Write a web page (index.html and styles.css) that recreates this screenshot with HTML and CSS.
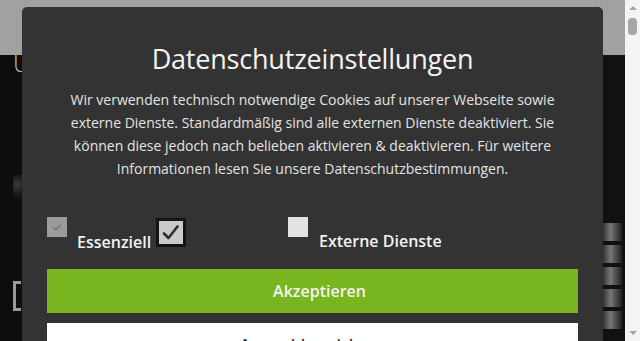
FILE: index.html
```html
<!DOCTYPE html>
<html lang="de">
<head>
<meta charset="utf-8">
<title>Datenschutzeinstellungen</title>
<link rel="stylesheet" href="styles.css">
</head>
<body>
<div class="window">
  <div class="page">
    <header class="topbar"></header>
    <section class="hero">
      <div class="hero-main">
        <span class="hero-title">U</span>
        <div class="hero-lights"></div>
        <span class="hero-bracket"></span>
      </div>
      <div class="hero-shelves">
        <span class="shelf"></span>
        <span class="shelf"></span>
        <span class="shelf"></span>
        <span class="shelf"></span>
        <span class="shelf"></span>
      </div>
    </section>
  </div>
  <div class="scrollbar">
    <span class="arrow arrow-up"></span>
    <span class="thumb"></span>
    <span class="track"></span>
    <span class="arrow arrow-down"></span>
  </div>

  <div class="modal" role="dialog" aria-labelledby="privacy-title">
    <h2 id="privacy-title" class="modal-title">Datenschutzeinstellungen</h2>
    <p class="modal-text">Wir verwenden technisch notwendige Cookies auf unserer Webseite sowie externe Dienste. Standardmäßig sind alle externen Dienste deaktiviert. Sie können diese jedoch nach belieben aktivieren &amp; deaktivieren. Für weitere Informationen lesen Sie unsere Datenschutzbestimmungen.</p>

    <div class="options">
      <label class="option option-essential">
        <span class="check check-disabled">
          <svg viewBox="0 0 20 20" width="20" height="20"><path d="M6.5 10.5 L9 12.8 L13.5 8" fill="none" stroke="#777" stroke-width="1.6" stroke-linecap="round" stroke-linejoin="round"/></svg>
        </span>
        <span class="option-label">Essenziell</span>
        <span class="check-big">
          <svg viewBox="0 0 24 23" width="24" height="23"><path d="M5 12.5 L9.5 17 L18.5 5.5" fill="none" stroke="#2e2e36" stroke-width="2.6" stroke-linecap="round" stroke-linejoin="round"/></svg>
        </span>
      </label>
      <label class="option option-external">
        <span class="check check-empty"></span>
        <span class="option-label">Externe Dienste</span>
      </label>
    </div>

    <button class="btn btn-accept" type="button">Akzeptieren</button>
    <button class="btn btn-save" type="button">Auswahl speichern</button>
  </div>
</div>
</body>
</html>
```

FILE: styles.css
```css
* {
  box-sizing: border-box;
}

html,
body {
  margin: 0;
  padding: 0;
  overflow: hidden;
}

body {
  font-family: "Open Sans", "Noto Sans", "DejaVu Sans", sans-serif;
  background: #0d0d0d;
}

.window {
  position: relative;
  display: flex;
  width: 640px;
  height: 341px;
  overflow: hidden;
}

.page {
  flex: 1;
  display: flex;
  flex-direction: column;
}

.topbar {
  height: 55px;
  background: #a1a1a1;
}

.hero {
  flex: 1;
  display: flex;
  background: #0d0d0d;
}

.hero-main {
  flex: 1;
  display: flex;
  flex-direction: column;
  padding-left: 13px;
}

.hero-title {
  font-family: "Open Sans", sans-serif;
  font-weight: 300;
  font-size: 24px;
  line-height: 20px;
  color: #b8b8b8;
  height: 20px;
  overflow: hidden;
  margin-top: -2px;
}

.hero-lights {
  width: 10px;
  height: 24px;
  margin-top: 102px;
  background: radial-gradient(circle at 40% 40%, #3a3a3a 0, #1a1a1a 60%, transparent 100%);
}

.hero-bracket {
  width: 8px;
  height: 30px;
  margin-top: 82px;
  border: 3px solid #9a9a9a;
  border-right: none;
}

.hero-shelves {
  width: 22px;
  display: flex;
  flex-direction: column;
  justify-content: flex-end;
  gap: 4px;
  padding-bottom: 12px;
  background: #111;
}

.shelf {
  height: 18px;
  margin-right: 3px;
  background: linear-gradient(90deg, #333 0, #777 40%, #4a4a4a 70%, #222 100%);
}

.scrollbar {
  width: 15px;
  display: flex;
  flex-direction: column;
  align-items: center;
  background: #f4f4f4;
}

.arrow {
  width: 0;
  height: 0;
  border-left: 4px solid transparent;
  border-right: 4px solid transparent;
}

.arrow-up {
  margin-top: 6px;
  border-bottom: 4px solid #a3a3a3;
}

.arrow-down {
  margin-bottom: 6px;
  border-top: 4px solid #a3a3a3;
}

.thumb {
  width: 9px;
  height: 17px;
  margin-top: 8px;
  border-radius: 4px;
  background: #a5a5a5;
}

.track {
  flex: 1;
}

.modal {
  position: absolute;
  left: 22px;
  top: 7px;
  width: 581px;
  height: 360px;
  padding: 33px 25px 0;
  background: #333333;
  border-radius: 5px;
  text-align: center;
  color: #fff;
}

.modal-title {
  margin: 0 0 10px;
  font-size: 27px;
  letter-spacing: -0.2px;
  line-height: 38px;
  font-weight: 400;
  color: #f4f4f4;
}

.modal-text {
  margin: 0;
  font-size: 14px;
  line-height: 23px;
  color: #e4e4e4;
}

.options {
  display: flex;
  align-items: flex-start;
  margin-top: 37px;
  text-align: left;
}

.option {
  display: flex;
  align-items: flex-start;
}

.option-essential {
  width: 241px;
}

.check {
  width: 20px;
  height: 20px;
  flex: none;
  display: block;
}

.check svg {
  display: block;
}

.check-disabled {
  background: #9b9b9b;
}

.check-empty {
  background: #e3e3e3;
}

.option-label {
  margin-top: 14px;
  font-size: 16px;
  line-height: 22px;
  font-weight: 600;
  color: #f2f2f2;
}

.option-essential .option-label {
  margin-left: 10px;
}

.option-external .option-label {
  margin-left: 11px;
  margin-top: 13px;
}

.check-big {
  width: 30px;
  height: 29px;
  margin-left: 5px;
  margin-top: 1px;
  display: flex;
  align-items: center;
  justify-content: center;
  border: 3px solid #141414;
  background: #cacaca;
}

.check-big svg {
  display: block;
}

.btn {
  display: block;
  width: 100%;
  height: 44px;
  padding: 0;
  border: none;
  border-radius: 0;
  font-family: "Open Sans", "Noto Sans", sans-serif;
  font-size: 16px;
  line-height: 44px;
  font-weight: 600;
  cursor: pointer;
}

.btn-accept {
  margin-top: 16px;
  padding-left: 14px;
  background: #79b51e;
  color: #f3f3f3;
}

.btn-save {
  margin-top: 10px;
  background: #ffffff;
  color: #333;
}
```
